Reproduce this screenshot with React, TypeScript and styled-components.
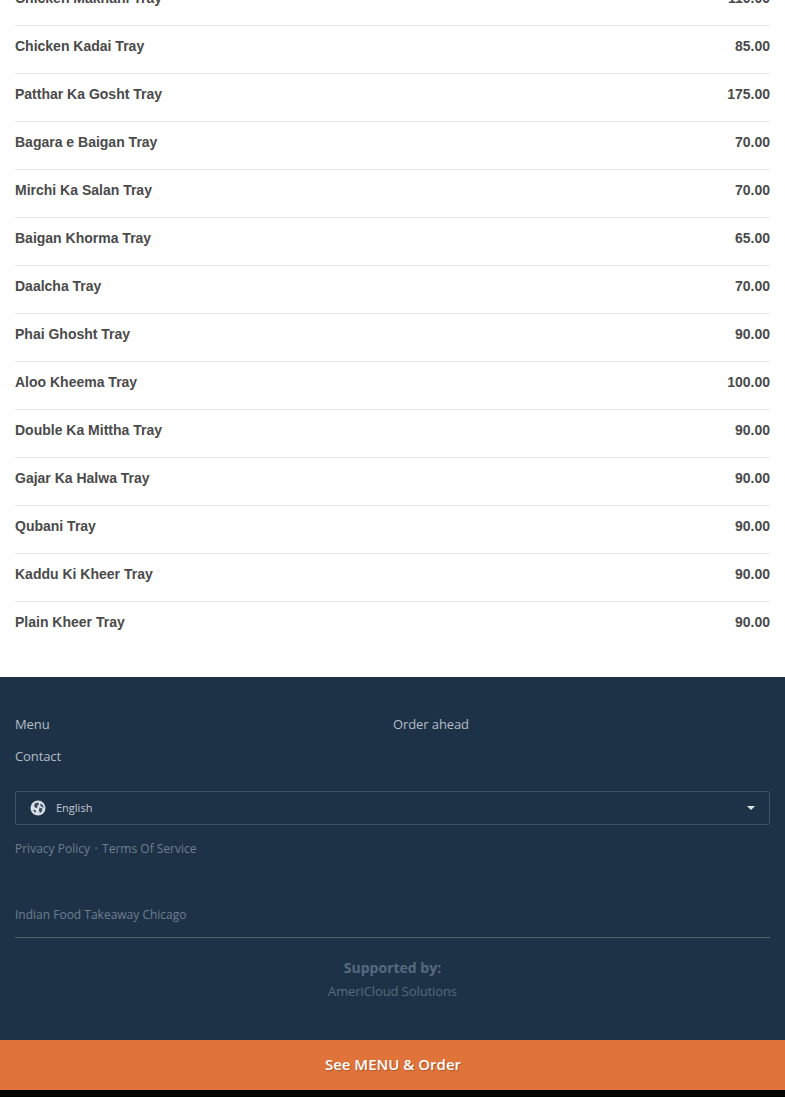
import React from 'react'
import styled, { createGlobalStyle } from 'styled-components'

const items = [
  ['Chicken Makhani Tray', '110.00'],
  ['Chicken Kadai Tray', '85.00'],
  ['Patthar Ka Gosht Tray', '175.00'],
  ['Bagara e Baigan Tray', '70.00'],
  ['Mirchi Ka Salan Tray', '70.00'],
  ['Baigan Khorma Tray', '65.00'],
  ['Daalcha Tray', '70.00'],
  ['Phai Ghosht Tray', '90.00'],
  ['Aloo Kheema Tray', '100.00'],
  ['Double Ka Mittha Tray', '90.00'],
  ['Gajar Ka Halwa Tray', '90.00'],
  ['Qubani Tray', '90.00'],
  ['Kaddu Ki Kheer Tray', '90.00'],
  ['Plain Kheer Tray', '90.00'],
]

const GlobalStyle = createGlobalStyle`
  html, body {
    margin: 0;
    padding: 0;
    height: 1097px;
    overflow: hidden;
    background: #000;
  }
`

const Page = styled.div`
  height: 1097px;
  overflow: hidden;
  display: flex;
  flex-direction: column;
`

const MenuList = styled.div`
  background: #fff;
  margin-top: -22px;
  padding: 0 15px 27px;
  font-family: 'Liberation Sans', Arial, sans-serif;
`

const MenuRow = styled.div`
  height: 48px;
  box-sizing: border-box;
  padding-bottom: 7px;
  display: flex;
  justify-content: space-between;
  align-items: center;
  font-size: 14px;
  font-weight: 700;
  color: #4a4a4a;
  border-bottom: 1px solid #e5e5e5;

  &:last-child {
    border-bottom: none;
    padding-bottom: 8px;
  }
`

const Footer = styled.footer`
  background: #1e3247;
  height: 363px;
  box-sizing: border-box;
  padding: 31px 15px 0;
  font-family: 'Open Sans', sans-serif;
`

const FooterLinks = styled.div`
  display: grid;
  grid-template-columns: 378px 1fr;
  grid-auto-rows: 32px;
`

const FooterLink = styled.div`
  font-size: 13px;
  letter-spacing: -0.1px;
  line-height: 32px;
  color: #b4bdc6;
`

const LangSelect = styled.div`
  margin-top: 19px;
  height: 34px;
  box-sizing: border-box;
  display: flex;
  align-items: center;
  padding: 0 14px 1px;
  border: 1px solid #415365;
  border-radius: 2px;
  font-size: 11px;
  color: #c3cbd3;
`

const GlobeSvg = styled.svg`
  width: 16px;
  height: 16px;
  margin-right: 10px;
`

const Caret = styled.span`
  margin-left: auto;
  width: 0;
  height: 0;
  border-left: 4px solid transparent;
  border-right: 4px solid transparent;
  border-top: 4px solid #dfe4e8;
`

const LegalRow = styled.div`
  margin-top: 15px;
  display: flex;
  gap: 4.5px;
  font-size: 12px;
  line-height: 17px;
  color: #6e7e8f;
`

const Tagline = styled.div`
  margin-top: 49px;
  padding-bottom: 14px;
  font-size: 12px;
  line-height: 17px;
  color: #6e7e8f;
  border-bottom: 1px solid #52626f;
`

const Supported = styled.div`
  margin-top: 20px;
  text-align: center;
  font-size: 14px;
  line-height: 19px;
  font-weight: 700;
  color: #566a7e;
`

const Supplier = styled.div`
  margin-top: 5px;
  text-align: center;
  font-size: 13px;
  letter-spacing: -0.1px;
  line-height: 18px;
  color: #566a7e;
`

const OrderBar = styled.div`
  height: 50px;
  box-sizing: border-box;
  padding: 0 0 2px 1px;
  background: #e0733a;
  display: flex;
  align-items: center;
  justify-content: center;
  font-family: 'Open Sans', sans-serif;
  font-size: 15px;
  font-weight: 600;
  color: #fff;
  text-shadow: 1px 1px 1px rgba(0, 0, 0, 0.25);
`

const GlobeIcon: React.FC = () => (
  <GlobeSvg viewBox="0 0 16 16">
    <circle cx="8" cy="8" r="7.5" fill="#d8dee3" />
    <path d="M5 3.2 8.2 2.4 9 4.4 7.2 6 7.6 7.6 5.6 8 4 6Z" fill="#3a4b5c" />
    <path d="M10.2 3.4 12.6 5 14 7.6 12.2 7.2 10.4 5.6Z" fill="#3a4b5c" />
    <path d="M9.4 7.6 12.4 8.4 11.8 11.6 10 13 9 10.4Z" fill="#3a4b5c" />
    <path d="M3 9.4 5.6 10.2 6 12.4 4.6 12.2Z" fill="#3a4b5c" />
  </GlobeSvg>
)

const App: React.FC = () => {
  return (
    <Page>
      <GlobalStyle />
      <MenuList>
        {items.map(([name, price]) => (
          <MenuRow key={name}>
            <span>{name}</span>
            <span>{price}</span>
          </MenuRow>
        ))}
      </MenuList>
      <Footer>
        <FooterLinks>
          <FooterLink>Menu</FooterLink>
          <FooterLink>Order ahead</FooterLink>
          <FooterLink>Contact</FooterLink>
        </FooterLinks>
        <LangSelect>
          <GlobeIcon />
          <span>English</span>
          <Caret />
        </LangSelect>
        <LegalRow>
          <span>Privacy Policy</span>
          <span>&#183;</span>
          <span>Terms Of Service</span>
        </LegalRow>
        <Tagline>Indian Food Takeaway Chicago</Tagline>
        <Supported>Supported by:</Supported>
        <Supplier>AmeriCloud Solutions</Supplier>
      </Footer>
      <OrderBar>See MENU &amp; Order</OrderBar>
    </Page>
  )
}

export default App
